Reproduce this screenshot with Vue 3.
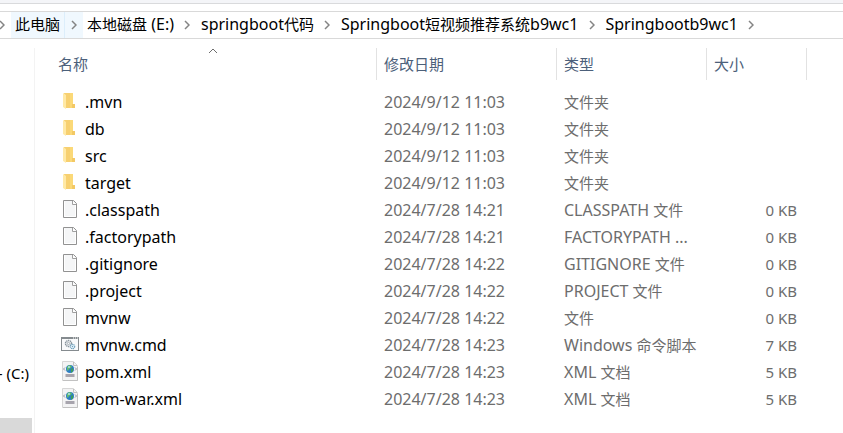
<script setup>
const crumbs = [
  { label: '此电脑', active: true },
  { label: '本地磁盘 (E:)' },
  { label: 'springboot代码' },
  { label: 'Springboot短视频推荐系统b9wc1' },
  { label: 'Springbootb9wc1' },
]

const files = [
  { name: '.mvn', date: '2024/9/12 11:03', type: '文件夹', size: '', icon: 'folder' },
  { name: 'db', date: '2024/9/12 11:03', type: '文件夹', size: '', icon: 'folder' },
  { name: 'src', date: '2024/9/12 11:03', type: '文件夹', size: '', icon: 'folder' },
  { name: 'target', date: '2024/9/12 11:03', type: '文件夹', size: '', icon: 'folder' },
  { name: '.classpath', date: '2024/7/28 14:21', type: 'CLASSPATH 文件', size: '0 KB', icon: 'file' },
  { name: '.factorypath', date: '2024/7/28 14:21', type: 'FACTORYPATH ...', size: '0 KB', icon: 'file' },
  { name: '.gitignore', date: '2024/7/28 14:22', type: 'GITIGNORE 文件', size: '0 KB', icon: 'file' },
  { name: '.project', date: '2024/7/28 14:22', type: 'PROJECT 文件', size: '0 KB', icon: 'file' },
  { name: 'mvnw', date: '2024/7/28 14:22', type: '文件', size: '0 KB', icon: 'file' },
  { name: 'mvnw.cmd', date: '2024/7/28 14:23', type: 'Windows 命令脚本', size: '7 KB', icon: 'cmd' },
  { name: 'pom.xml', date: '2024/7/28 14:23', type: 'XML 文档', size: '5 KB', icon: 'xml' },
  { name: 'pom-war.xml', date: '2024/7/28 14:23', type: 'XML 文档', size: '5 KB', icon: 'xml' },
]

// Latin runs are set one size larger than the Chinese runs beside them.
const runs = (text) =>
  text.match(/[\u4e00-\u9fff]+|[^\u4e00-\u9fff]+/g).map((t) => ({ t, latin: t.charCodeAt(0) < 256 }))
</script>

<template>
  <div class="explorer">
    <div class="ribbon"></div>
    <nav class="address">
      <svg class="chevron lead" viewBox="0 0 6 10"><path d="M1 1l4 4-4 4" /></svg>
      <div v-for="c in crumbs" :key="c.label" class="crumb" :class="{ active: c.active }">
        <a href="#" class="crumb-link"><span v-for="r in runs(c.label)" :key="r.t" :class="{ latin: r.latin }">{{ r.t }}</span></a>
        <span class="crumb-arrow">
          <svg class="chevron" viewBox="0 0 6 10"><path d="M1 1l4 4-4 4" /></svg>
        </span>
      </div>
    </nav>
    <div class="body">
      <aside class="tree">
        <a href="#" class="drive">- (C:)</a>
        <div class="selected"></div>
      </aside>
      <main class="list">
        <table>
          <colgroup>
            <col class="c-name" /><col class="c-date" /><col class="c-type" /><col class="c-size" />
          </colgroup>
          <thead>
            <tr>
              <th class="name-head">
                名称
                <svg class="sort" viewBox="0 0 10 6"><path d="M1 5l4-4 4 4" /></svg>
              </th>
              <th>修改日期</th>
              <th>类型</th>
              <th>大小</th>
            </tr>
          </thead>
          <tbody>
            <tr v-for="f in files" :key="f.name">
              <td class="name-cell">
                <a href="#" class="file">
                  <svg class="icon" viewBox="0 0 18 20">
                    <g v-if="f.icon === 'folder'">
                      <path d="M3 2h9v12l1 1v2H5z" fill="#f7d070" />
                      <path d="M9 2h3v12l1 1v2H9z" fill="#fbd978" />
                      <path d="M2 2l3 2v14l-3-2z" fill="#ffe9a6" />
                      <path d="M11 13h3v4h-3z" fill="#f3c965" />
                    </g>
                    <g v-else-if="f.icon === 'file'">
                      <path d="M2.500 1.500h10l3 3v14h-13z" fill="#f5f6f7" stroke="#929292" />
                      <path d="M11.500 2v3.500H15" fill="#fff" stroke="#a0a0a0" />
                      <path d="M3.500 2.500v15h11V6" fill="none" stroke="#fff" />
                    </g>
                    <g v-else-if="f.icon === 'cmd'">
                      <rect x=".5" y="3.500" width="17" height="13" fill="#f9fafb" stroke="#858b8f" />
                      <path d="M0 4h18" stroke="#858b8f" stroke-width="2" />
                      <path d="M12 4h1m1 0h1m1 0h1" stroke="#fff" />
                      <circle cx="7.500" cy="9.500" r="3" fill="none" stroke="#86929b" stroke-width="1.500" stroke-dasharray="1.300 .6" />
                      <circle cx="7.500" cy="9.500" r="1.200" fill="none" stroke="#86929b" stroke-width=".7" />
                      <circle cx="11.500" cy="12.500" r="2.200" fill="#e5f2fa" stroke="#71a2bd" stroke-width="1.200" stroke-dasharray="1.200 .5" />
                      <circle cx="11.500" cy="12.500" r=".7" fill="#71a2bd" />
                    </g>
                    <g v-else>
                      <path d="M1.500.5h11l4 4v15h-15z" fill="#f3f3f4" stroke="#d6d6d6" />
                      <path d="M12.500 1v3.500H16M2 19.500h14.500V6" fill="none" stroke="#c1c1c1" />
                      <circle cx="9" cy="8" r="4" fill="#2b7cc5" />
                      <path d="M6 6l2-2 3 1-1 2-2 1-1 2-1-1z" fill="#62bd6c" />
                      <path d="M10 8l2-1v3l-2 2z" fill="#3fa057" />
                      <circle cx="8" cy="6" r="1" fill="#b7e4ee" />
                      <path d="M4 6.500L2.500 8 4 9.500M14 6.500L15.500 8 14 9.500" fill="none" stroke="#9299a6" />
                      <path d="M4.500 13h9v3h-9z" fill="#a7a4ad" />
                    </g>
                  </svg>
                  <span class="latin">{{ f.name }}</span>
                </a>
              </td>
              <td class="latin">{{ f.date }}</td>
              <td><span v-for="r in runs(f.type)" :key="r.t" :class="{ latin: r.latin }">{{ r.t }}</span></td>
              <td class="size">{{ f.size }}</td>
            </tr>
          </tbody>
        </table>
      </main>
    </div>
  </div>
</template>

<style>
body {
  margin: 0;
  background: #fff;
}
</style>

<style scoped>
.explorer {
  display: flex;
  flex-direction: column;
  min-height: 100vh;
  overflow: hidden;
  font-family: "Noto Sans", "Noto Sans CJK SC", sans-serif;
  font-size: 15px;
  color: #000;
}
a {
  color: inherit;
  text-decoration: none;
}
.latin {
  font-size: 16px;
}
.ribbon {
  height: 3px;
  background: #f4f5f8;
  border-bottom: 1px solid #d9dadc;
}
.address {
  display: flex;
  align-items: stretch;
  height: 26px;
  margin-top: 7px;
  border-top: 1px solid #d9d9d9;
  border-bottom: 1px solid #d9d9d9;
  white-space: nowrap;
}
.chevron {
  width: 6px;
  height: 10px;
  fill: none;
  stroke: #848484;
  stroke-width: 1.5;
}
.lead {
  align-self: center;
  margin: 0 6px 0 -1px;
}
.crumb {
  display: flex;
}
.crumb-link {
  padding: 0 4px;
  line-height: 24px;
}
.crumb-arrow {
  display: flex;
  align-items: center;
  justify-content: center;
  box-sizing: border-box;
  width: 19px;
}
.active {
  background: #f0f8fe;
}
.active .crumb-arrow {
  border-left: 1px solid #dceefb;
}
.body {
  display: flex;
  flex: 1;
}
.tree {
  display: flex;
  flex-direction: column;
  justify-content: flex-end;
  box-sizing: border-box;
  width: 35px;
  margin-top: 9px;
  border-right: 1px solid #f3f3f3;
  overflow: hidden;
}
.drive {
  display: flex;
  justify-content: flex-end;
  margin-bottom: 32px;
  padding-right: 5px;
  line-height: 26px;
  white-space: nowrap;
}
.selected {
  width: 32px;
  height: 15px;
  background: #d9d9d9;
}
.list {
  flex: 1;
  padding-top: 9px;
}
table {
  table-layout: fixed;
  width: 772px;
  border-spacing: 0;
}
.c-name {
  width: 342px;
}
.c-date {
  width: 180px;
}
.c-type {
  width: 150px;
}
.c-size {
  width: 100px;
}
th {
  position: relative;
  box-sizing: border-box;
  height: 32px;
  padding: 0 7px 2px;
  border-right: 1px solid #e2e2e2;
  font-weight: 400;
  text-align: left;
  color: #4c607a;
}
.name-head {
  padding-left: 23px;
}
.sort {
  position: absolute;
  top: 0;
  left: 173px;
  width: 10px;
  height: 6px;
  fill: none;
  stroke: #6d6d6d;
}
tbody::before {
  display: block;
  height: 9px;
  content: "";
}
td {
  height: 27px;
  padding: 0 7px;
  line-height: 27px;
  white-space: nowrap;
  color: #6d6d6d;
}
.name-cell {
  padding-left: 26px;
  color: #000;
}
.file {
  display: flex;
  align-items: center;
  gap: 6px;
}
.icon {
  width: 18px;
  height: 20px;
  margin-bottom: 4px;
}
.size {
  padding-right: 10px;
  text-align: right;
}
</style>
